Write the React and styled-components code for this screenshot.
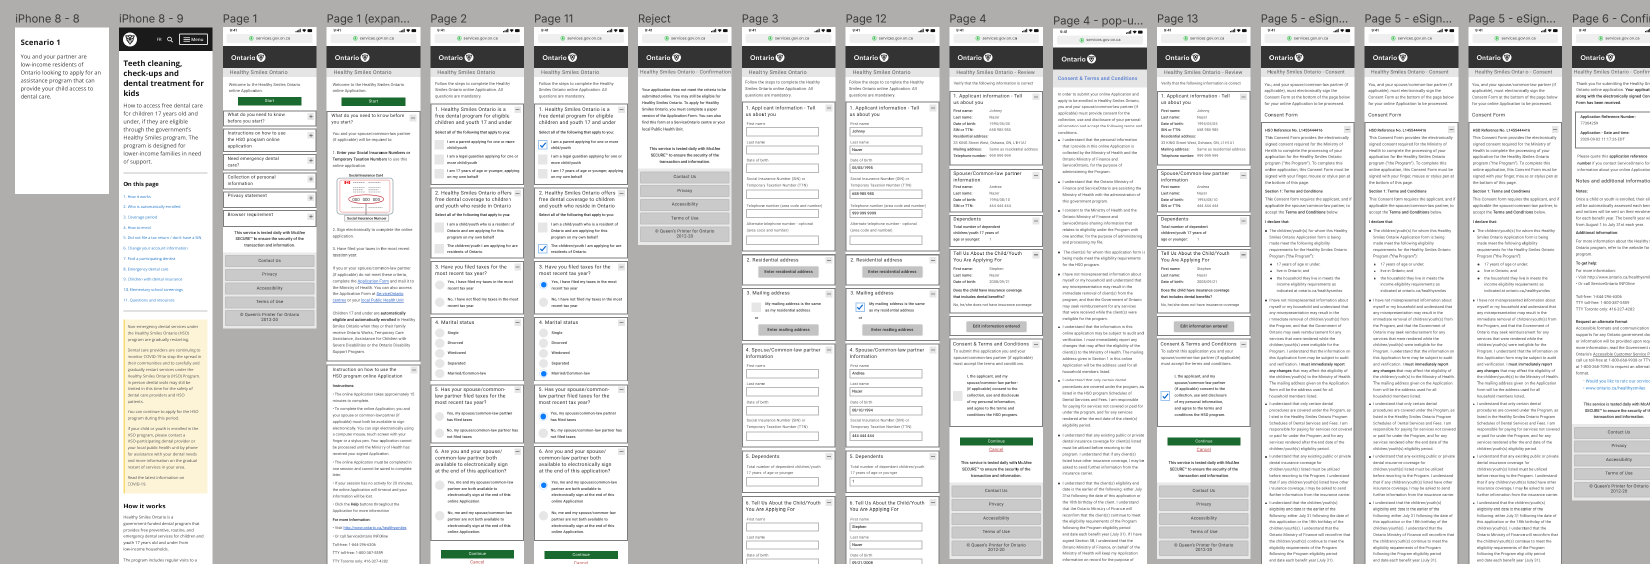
import React from "react";
import styled, { createGlobalStyle, css } from "styled-components";

const Global = createGlobalStyle`
  *, *::before, *::after { box-sizing: border-box; }
  body { margin: 0; background: #afaeac; text-rendering: geometricPrecision; }
  p, ul { margin: 0; padding: 0; }
`;

/* ---------- canvas ---------- */

const Viewport = styled.div`
  width: 1650px;
  height: 564px;
  overflow: hidden;
  background: #afaeac;
`;

/* Screens are laid out at twice their size and shown at half, so small type keeps exact metrics. */
const Canvas = styled.main`
  display: flex;
  align-items: flex-start;
  gap: 10.05px;
  width: 1650px;
  height: 564px;
  padding-left: 15.2px;
  overflow: hidden;
  background: #afaeac;
  font-family: Roboto, "Liberation Sans", sans-serif;
  zoom: 2;
  transform: scale(0.5);
  transform-origin: 0 0;
  will-change: transform;
`;

const Column = styled.section`
  flex: none;
  width: 93.75px;
`;

const FrameLabel = styled.div`
  height: ${(p) => p.$h || 27}px;
  padding-bottom: ${(p) => p.$pb ?? 0.6}px;
  display: flex;
  align-items: flex-end;
  font: 400 11.15px/15px Inter, sans-serif;
  color: #3b3a3a;
  white-space: nowrap;
`;

const Sheet = styled.article`
  background: #fff;
  min-height: ${(p) => (p.$tall ? "540px" : "0")};
`;

/* ---------- text ---------- */

const Txt = styled.p`
  font-size: ${(p) => p.$s || 4}px;
  line-height: ${(p) => p.$lh || 6.4}px;
  letter-spacing: ${(p) => p.$ls ?? 0.06}px;
  font-weight: ${(p) => p.$w || 400};
  color: ${(p) => p.$c || "#4d4d4d"};
  margin-top: ${(p) => p.$mt || 0}px;
  margin-left: ${(p) => p.$ml || 0}px;
  text-align: ${(p) => (p.$center ? "center" : "left")};
  white-space: pre;
  b { font-weight: 500; color: #222; }
  a { color: #2b5fc0; text-decoration: underline; }
`;

const Strong = styled(Txt)`
  font-weight: 500;
  color: #222;
`;

const HeadText = styled(Txt)`
  flex: 1;
  min-width: 0;
  color: #2b2b2b;
  line-height: 6.5px;
`;

/* ---------- phone chrome ---------- */

const Chrome = styled.header`
  height: 18.8px;
  padding: 0 3.9px;
  background: #fff;
`;

const StatusBar = styled.div`
  display: flex;
  justify-content: space-between;
  align-items: center;
  height: 7px;
  padding: 0 0 0 3px;
  font: 600 3.6px/7px Inter, sans-serif;
  color: #111;
`;

const AddressBar = styled.div`
  display: flex;
  align-items: center;
  justify-content: center;
  gap: 2.2px;
  height: 9px;
  border-radius: 2px;
  background: #efefef;
  font: 400 3.85px/9px Inter, sans-serif;
  color: #444;
`;

const Brand = styled.div`
  display: flex;
  align-items: center;
  gap: 1.2px;
  height: 22.2px;
  padding: 1px 0 0 8.3px;
  background: #333;
  color: #fff;
  font: 700 6.6px/8px Lato, sans-serif;
  letter-spacing: 0.25px;
`;

const TitleBand = styled.div`
  height: ${(p) => (p.$link ? 17.8 : 8.8)}px;
  line-height: ${(p) => (p.$link ? 18.6 : 8.8)}px;
  padding-left: ${(p) => p.$pl ?? 7}px;
  background: #e5e5e5;
  color: ${(p) => (p.$link ? "#4a74cf" : "#5a5a5a")};
  font-size: ${(p) => p.$s || 5.25}px;
  font-weight: ${(p) => (p.$link ? 500 : 400)};
  letter-spacing: ${(p) => p.$ls ?? 0.22}px;
  white-space: nowrap;
`;

const Trillium = ({ size = 9, ink = "#222" }) => (
  <svg width={size} height={size} viewBox="0 0 18 18">
    <circle cx="9" cy="9" r="9" fill="#fff" />
    <g fill="none" stroke={ink} strokeWidth="1.15" strokeLinejoin="round" strokeLinecap="round">
      <path d="M9 8.400C8.200 5.600 6 4 3.500 4.200 3.800 6.800 6 8.600 9 8.400z" />
      <path d="M9 8.400C9.800 5.600 12 4 14.500 4.200 14.200 6.800 12 8.600 9 8.400z" />
      <path d="M9 8.400C6.900 10.400 6.900 12.900 9 15c2.100-2.100 2.100-4.600 0-6.600z" />
      <path d="M4.600 7.800c.3 2.300 1.400 4.200 3 5.200M13.400 7.800c-.3 2.300-1.400 4.200-3 5.200M7 4.200c1.300-.9 2.700-.9 4 0" />
    </g>
  </svg>
);

const SignalIcons = () => (
  <svg width="17" height="4" viewBox="0 0 17 4">
    <g fill="#111">
      <path d="M0 2.600h1v1.200H0zM1.400 2h1v1.800h-1zM2.800 1.200h1v2.600h-1zM4.200.3h1v3.500h-1z" />
      <path d="M6.600 1.400a3.200 3.200 0 0 1 4.200 0L8.700 3.800z" />
      <rect x="12" y=".6" width="4.600" height="3" rx=".8" />
    </g>
  </svg>
);

const Shield = () => (
  <svg width="4.600" height="4.600" viewBox="0 0 9 9">
    <circle cx="4.500" cy="4.500" r="3.900" fill="#dff5e2" stroke="#4fc764" strokeWidth="1.100" />
    <path d="M3.300 4v2.400h2.400V4zM3.700 4V3a.8.8 0 0 1 1.600 0v1" fill="#38b44c" stroke="#38b44c" strokeWidth=".6" />
  </svg>
);

const PageTop = ({ title, pl, s, ls, link }) => (
  <>
    <Chrome>
      <StatusBar>
        <span>9:41</span>
        <SignalIcons />
      </StatusBar>
      <AddressBar>
        <Shield />
        services.gov.on.ca
      </AddressBar>
    </Chrome>
    <Brand>
      Ontario
      <Trillium />
    </Brand>
    <TitleBand $pl={pl} $s={s} $ls={ls} $link={link}>{title}</TitleBand>
  </>
);

/* ---------- cards, controls ---------- */

const Card = styled.section`
  margin-top: ${(p) => p.$mt}px;
  height: ${(p) => p.$h}px;
  padding: ${(p) => p.$pt || 0}px 1px 0 ${(p) => p.$pl ?? 3.8}px;
  border: 1px solid #7d7d7d;
  background: #fff;
`;

const CardHead = styled.div`
  display: flex;
  align-items: flex-start;
  height: ${(p) => p.$n * 6.5}px;
`;

const Toggle = styled.span`
  flex: none;
  width: 6.8px;
  height: 6.8px;
  margin: ${(p) => p.$mt ?? -0.2}px ${(p) => p.$mr ?? 1}px 0 0;
  background: #e6e6e6;
  display: flex;
  align-items: center;
  justify-content: center;
`;

const ToggleIcon = ({ plus }) => (
  <svg width="5" height="5" viewBox="0 0 5 5">
    <path d={plus ? "M.8 2.500h3.400M2.500.8v3.400" : "M.5 2.500h4"} stroke="#666" strokeWidth=".7" />
  </svg>
);

const Head = ({ n = 1, s = 5, ls = 0.19, plus, mt, mr, children }) => (
  <CardHead $n={n}>
    <HeadText $s={s} $ls={ls} $lh={6.5}>{children}</HeadText>
    <Toggle $mt={mt} $mr={mr}><ToggleIcon plus={plus} /></Toggle>
  </CardHead>
);

const Button = styled.div`
  width: ${(p) => p.$w || 73.2}px;
  height: ${(p) => p.$h || 8.3}px;
  line-height: ${(p) => p.$h || 8.3}px;
  margin: ${(p) => p.$mt || 0}px 0 0 ${(p) => p.$ml ?? 10.4}px;
  background: #1a692e;
  color: #e8f3ea;
  font-size: 4.1px;
  letter-spacing: 0.12px;
  text-align: center;
`;

const GreyButton = styled(Button)`
  width: 60px;
  background: #c3c3c3;
  color: #2e2e2e;
  font-weight: 500;
  border-radius: 1px;
  box-shadow: 0 0 1px #aaa;
`;

const CancelLink = styled.div`
  margin-top: ${(p) => p.$mt}px;
  font-size: 4.500px;
  line-height: 6.4px;
  letter-spacing: 0.1px;
  text-align: center;
  color: #bd4b4b;
  text-decoration: underline;
  text-decoration-thickness: 0.4px;
`;

const OptionRow = styled.div`
  display: flex;
  align-items: ${(p) => (p.$mid ? "center" : "flex-start")};
  gap: ${(p) => p.$gap || 3.300}px;
  margin-top: ${(p) => p.$mt}px;
  margin-left: ${(p) => p.$ml || 0}px;
`;

const controlBase = css`
  flex: none;
  display: flex;
  align-items: center;
  justify-content: center;
  margin-top: ${(p) => p.$mt ?? 1.2}px;
`;

const Box = styled.span`
  ${controlBase}
  width: 9.5px;
  height: 9.6px;
  margin-left: -0.8px;
  background: ${(p) => (p.$on ? "#fff" : "#e6e6e6")};
  border: ${(p) => (p.$on ? "1px solid #9cc4ee" : "0")};
`;

const Dot = styled.span`
  ${controlBase}
  width: 9.2px;
  height: 9.2px;
  border-radius: 50%;
  background: ${(p) => (p.$on ? "#fff" : "#e6e6e6")};
  border: ${(p) => (p.$on ? "1px solid #dcebfb" : "0")};
  &::after {
    content: "";
    display: ${(p) => (p.$on ? "block" : "none")};
    width: 5.6px;
    height: 5.6px;
    border-radius: 50%;
    background: #0a7cff;
  }
`;

const Tick = () => (
  <svg width="7" height="7" viewBox="0 0 7 7">
    <path d="M.8 3.800l1.800 1.800L6.200 1.200" fill="none" stroke="#0b68d0" strokeWidth="1.200" />
  </svg>
);

const Option = ({ mt, ml, gap, round, on, mid, drop, children }) => (
  <OptionRow $mt={mt} $ml={ml} $gap={gap} $mid={mid}>
    {round ? <Dot $on={on} $mt={mid ? 0 : drop} /> : <Box $on={on} $mt={drop}>{on && <Tick />}</Box>}
    <Txt $s={3.75} $ls={0.09} $w={500} $c="#3c3c3c">{children}</Txt>
  </OptionRow>
);

const Input = styled.div`
  width: 73px;
  height: 9.4px;
  margin-top: ${(p) => p.$mt ?? -0.4}px;
  padding-left: 1.500px;
  border: 1px solid #b9b9b9;
  font-size: 3.900px;
  line-height: 7.4px;
  font-weight: 500;
  color: #333;
`;

const Field = ({ label, value, mt, gap }) => (
  <div>
    <Txt $s={3.75} $ls={0.1} $ml={0.800} $mt={mt} $c="#5a5a5a">{label}</Txt>
    <Input $mt={gap}>{value}</Input>
  </div>
);

const FactGrid = styled.div`
  display: grid;
  grid-template-columns: 36px 1fr;
  margin-top: ${(p) => p.$mt}px;
`;

const Facts = ({ mt, keys, values }) => (
  <FactGrid $mt={mt}>
    <Txt $s={3.75} $ls={0.06} $lh={6.38} $c="#3a3a3a" $w={500}>{keys}</Txt>
    <Txt $s={3.75} $ls={0.06} $lh={6.38} $c="#5c5c5c">{values}</Txt>
  </FactGrid>
);

/* ---------- footer ---------- */

const FooterBlock = styled.footer`
  display: flex;
  flex-direction: column;
  gap: 1.75px;
  height: 76.300px;
  margin-top: 3.400px;
  padding: 2.800px 2px 0;
  background: #e9e9e9;
`;

const FooterLink = styled.div`
  flex: none;
  display: flex;
  align-items: center;
  justify-content: center;
  height: ${(p) => p.$h || 12}px;
  border-radius: 1px;
  border: 1px solid #c0c0c0;
  background: #cacaca;
  font-size: 4.300px;
  line-height: 4.900px;
  letter-spacing: 0.16px;
  text-align: center;
  white-space: pre;
  color: #333;
`;

const Footer = ({ mt }) => (
  <>
    <Txt $mt={mt} $center $w={500} $c="#333" $ls={0}>
      {"This service is tested daily with McAfee\nSECURE™ to ensure the security of the\ntransaction and information."}
    </Txt>
    <FooterBlock>
      <FooterLink>Contact Us</FooterLink>
      <FooterLink>Privacy</FooterLink>
      <FooterLink>Accessibility</FooterLink>
      <FooterLink>Terms of Use</FooterLink>
      <FooterLink $h={15.6}>{"© Queen’s Printer for Ontario\n2012-20"}</FooterLink>
    </FooterBlock>
  </>
);

/* ---------- bullets ---------- */

const BulletRow = styled.div`
  display: flex;
  align-items: flex-start;
  margin-top: ${(p) => p.$mt}px;
  padding-left: ${(p) => p.$pl || 0}px;
`;

const Marker = styled.i`
  flex: none;
  width: 1.800px;
  height: 1.800px;
  margin: 2.300px ${(p) => p.$gap || 2.400}px 0 0;
  border-radius: 50%;
  background: #444;
`;

const Bullet = ({ mt, pl, gap, ls, children }) => (
  <BulletRow $mt={mt} $pl={pl}>
    <Marker $gap={gap} />
    <Txt $s={3.9} $ls={ls ?? 0.04}>{children}</Txt>
  </BulletRow>
);

/* ---------- Ontario.ca article ---------- */

const Article = styled(Sheet)`
  font-family: "Open Sans", "Noto Sans", sans-serif;
  min-height: 540px;
`;

const ScenarioSheet = styled(Sheet)`
  height: 166.500px;
  padding: 10.600px 0 0 5.400px;
  font-family: "Open Sans", "Noto Sans", sans-serif;
`;

const SiteHeader = styled.header`
  display: flex;
  align-items: center;
  height: 23.300px;
  padding: 0 4px;
  background: #1a1a1a;
  color: #eee;
  font-size: 4.400px;
`;

const Lang = styled.span`
  margin-left: 19.600px;
`;

const SearchIcon = styled.svg`
  margin-left: 5.500px;
`;

const MenuButton = styled.span`
  display: flex;
  align-items: center;
  justify-content: center;
  gap: 1.300px;
  width: 28.700px;
  height: 11.300px;
  margin-left: 6px;
  border: 1px solid #ddd;
  border-radius: 1px;
  font-weight: 600;
`;

const ArticleBody = styled.div`
  padding: 0 5px 0 4.400px;
`;

const Display = styled.h2`
  margin: ${(p) => p.$mt || 0}px 0 0 ${(p) => p.$ml || 0}px;
  font: 700 ${(p) => p.$s}px/${(p) => p.$lh || 8}px "Open Sans", sans-serif;
  letter-spacing: ${(p) => p.$ls || 0}px;
  color: #161616;
  white-space: pre;
`;

const Rule = styled.hr`
  margin: ${(p) => p.$mt}px 0 0;
  height: 1px;
  border: 0;
  background: #c2c2c2;
`;

const Notice = styled.aside`
  height: 174px;
  margin-top: 7.900px;
  padding: 4.400px 0 0 2.600px;
  border-left: 1.500px solid #f7dc74;
  background: #fdf4d8;
`;

/* ---------- screens ---------- */

const Screen = ({ label, tall, labelH, labelPb, children }) => (
  <Column>
    <FrameLabel $h={labelH} $pb={labelPb}>{label}</FrameLabel>
    <Sheet $tall={tall}>{children}</Sheet>
  </Column>
);

const Scenario = () => (
  <Column>
    <FrameLabel $h={27.7} $pb={1.2}>iPhone 8 - 8</FrameLabel>
    <ScenarioSheet>
      <Display $s={7.6} $ls={0.12}>Scenario 1</Display>
      <Txt $s={5.55} $lh={8} $ls={0.04} $mt={6.700} $c="#2e2e2e">
        {"You and your partner are\nlow-income residents of\nOntario looking to apply for an\nassistance program that can\nprovide your child access to\ndental care."}
      </Txt>
    </ScenarioSheet>
  </Column>
);

const OntarioArticle = () => (
  <Column>
    <FrameLabel $h={27.7} $pb={1.2}>iPhone 8 - 9</FrameLabel>
    <Article>
      <SiteHeader>
        <Trillium size={14} />
        <Lang>FR</Lang>
        <SearchIcon width="6" height="6" viewBox="0 0 12 12">
          <circle cx="5" cy="5" r="3.800" fill="none" stroke="#fff" strokeWidth="1.500" />
          <path d="M7.800 7.800L11.400 11.400" stroke="#fff" strokeWidth="1.800" />
        </SearchIcon>
        <MenuButton>
          <svg width="6.500" height="5" viewBox="0 0 13 10">
            <path d="M0 1.500h13M0 5h13M0 8.500h13" stroke="#fff" strokeWidth="1.700" />
          </svg>
          Menu
        </MenuButton>
      </SiteHeader>
      <ArticleBody>
        <Display $s={7.75} $lh={10} $mt={7}>{"Teeth cleaning,\ncheck-ups and\ndental treatment for\nkids"}</Display>
        <Txt $s={5.5} $lh={8} $ls={0.04} $mt={4} $c="#333">
          {"How to access free dental care\nfor children 17 years old and\nunder, if they are eligible\nthrough the government’s\nHealthy Smiles program. The\nprogram is designed for\nlower-income families in need\nof support."}
        </Txt>
        <Rule $mt={6.300} />
        <Display $s={5.65} $mt={7.400}>On this page</Display>
        <Txt $s={3.85} $lh={10.36} $ls={0} $mt={3.100} $c="#2478c8">
          {"1. How it works\n2. Who is automatically enrolled\n3. Coverage period\n4. How to enrol\n5. Did not file a tax return / don’t have a SIN\n6. Change your account information\n7. Find a participating dentist\n8. Emergency dental care\n9. Children with dental insurance\n10. Elementary school screenings\n11. Questions and resources"}
        </Txt>
        <Rule $mt={5} />
        <Notice>
          <Txt $s={4} $lh={6.42} $ls={0}>{"Non-emergency dental services under\nthe Healthy Smiles Ontario (HSO)\nprogram are gradually restarting."}</Txt>
          <Txt $s={4} $lh={6.42} $ls={0} $mt={4.400}>{"Dental care providers are continuing to\nmonitor COVID-19 to stop the spread in\ntheir communities and to carefully and\ngradually restart services under the\nHealthy Smiles Ontario (HSO) Program.\nIn person dental visits may still be\nlimited in this time for the safety of\ndental care providers and HSO\npatients."}</Txt>
          <Txt $s={4} $lh={6.42} $ls={0} $mt={3.600}>{"You can continue to apply for the HSO\nprogram during this period."}</Txt>
          <Txt $s={4} $lh={6.42} $ls={0} $mt={3.900}>{"If your child or youth is enrolled in the\nHSO program, please contact a\nHSO-participating dental provider or\nyour local public health unit by phone\nfor assistance with your dental needs\nand more information on the gradual\nrestart of services in your area."}</Txt>
          <Txt $s={4} $lh={6.42} $ls={0} $mt={4.100}>{"Read the latest information on\nCOVID-19."}</Txt>
        </Notice>
        <Display $s={6.45} $mt={8.300}>How it works</Display>
        <Txt $s={4} $lh={6.42} $ls={0} $mt={4.500} $c="#333">{"Healthy Smiles Ontario is a\ngovernment-funded dental program that\nprovides free preventive, routine, and\nemergency dental services for children and\nyouth 17 years old and under from\nlow-income households."}</Txt>
        <Txt $s={4} $lh={6.42} $ls={0} $mt={4.500} $c="#333">The program includes regular visits to a</Txt>
      </ArticleBody>
    </Article>
  </Column>
);

const accordion = [
  ["What do you need to know\nbefore you start?", 16.4, 4.6, 0.500],
  ["Instructions on how to use\nthe HSO program online\napplication", 23.3, 2, 1],
  ["Need emergency dental\ncare?", 16.7, 2, 1],
  ["Collection of personal\ninformation", 16.7, 2, 0.8],
  ["Privacy statement", 16.7, 2, 0.800],
  ["Browser requirement", 16.7, 2, 1],
];

const PageOne = () => (
  <Screen label="Page 1">
    <PageTop title="Healthy Smiles Ontario" />
    <Txt $mt={5} $ml={6}>{"Welcome to the Healthy Smiles Ontario\nonline Application."}</Txt>
    <Button $mt={2.4} $h={8.7} $w={63.7} $ml={15}>Start</Button>
    {accordion.map(([text, h, mt, pt]) => (
      <Card key={text} $h={h} $mt={mt} $pt={pt}>
        <Head s={4.5} ls={0.200} n={text.split("\n").length} plus mt={1.200} mr={0.300}>{text}</Head>
      </Card>
    ))}
    <Footer mt={3.100} />
  </Screen>
);

const CardDrawing = styled.svg`
  display: block;
  margin-left: 5.200px;
`;

const InsuranceCard = () => (
  <CardDrawing width="60" height="57.600" viewBox="0 0 60 57.600" fontFamily="Roboto" textAnchor="middle">
    <text x="29.500" y="7" fontSize="3.500" fontWeight="700" fill="#333">Social Insurance Card</text>
    <rect x=".5" y="8.600" width="56" height="36" rx="3" fill="#fff" stroke="#9aa6ad" strokeWidth=".8" />
    <rect x="3.400" y="10.600" width="50" height="32" rx="2" fill="none" stroke="#f3a0a0" strokeWidth=".7" />
    <path d="M8 11.500h1.600v3H8zM12 11.500h1.600v3H12zM9.900 13l.9-1.500.9 1.500-.9 1.200z" fill="#e8262c" />
    <path d="M16.500 12.800h12M32 12.800h12M16.500 18h12M32 18h12M16.500 20.300h10M32 20.300h10M16.500 22.500h12M32 22.500h12M15 38h12M32 38h14" stroke="#777" strokeWidth=".6" strokeDasharray="1.400 .5" />
    <ellipse cx="29.700" cy="29.700" rx="17.500" ry="4.400" fill="none" stroke="#c6303a" strokeWidth=".6" />
    <text x="19.500" y="31.400" fontSize="4.300" fill="#333">000</text>
    <text x="29.700" y="31.400" fontSize="4.300" fill="#333">000</text>
    <text x="39.900" y="31.400" fontSize="4.300" fill="#333">000</text>
    <path d="M29.500 34v12" stroke="#555" strokeWidth=".6" />
    <rect x="8.300" y="45.800" width="44" height="5.800" fill="#fff" stroke="#888" strokeWidth=".5" />
    <text x="30.300" y="50" fontSize="3.500" fontWeight="700" fill="#333">Social Insurance Number</text>
  </CardDrawing>
);

const PageOneExpanded = () => (
  <Screen label="Page 1 (expan..." tall>
    <PageTop title="Healthy Smiles Ontario" />
    <Txt $mt={5} $ml={6}>{"Welcome to the Healthy Smiles Ontario\nonline Application."}</Txt>
    <Button $mt={3.100} $w={63.7} $ml={15}>Start</Button>
    <Card $mt={5} $h={250.300} $pt={1.100}>
      <Head n={2} s={4.5} ls={0.200} mt={1.500} mr={1.800}>{"What do you need to know before\nyou start?"}</Head>
      <Txt $mt={4.700} $ml={1.200} $lh={6.430}>
        {"You and your spouse/common-law partner\n(if applicable) will be required to:\n\n1. "}
        <b>{"Enter your Social Insurance Numbers or\nTemporary Taxation Numbers"}</b>
        {" to use this\nonline application."}
      </Txt>
      <InsuranceCard />
      <Txt $ml={1.200} $lh={6.430}>
        {"2. Sign electronically to complete the online\napplication.\n\n3. Have filed your taxes in the most recent\ntaxation year.\n\nIf you or your spouse/common-law partner\n(if applicable) do not meet these criteria,\ncomplete the "}
        <a>Application Form</a>
        {" and mail it to\nthe Ministry of Health. You can also access\nthe Application Form at "}
        <a>{"ServiceOntario\ncentres"}</a>
        {" or your "}
        <a>local Public Health Unit</a>
        {"\n\nChildren 17 and under are "}
        <b>{"automatically\neligible and automatically enrolled"}</b>
        {" in Healthy\nSmiles Ontario when they or their family\nreceive Ontario Works, Temporary Care\nAssistance, Assistance for Children with\nSevere Disabilities or the Ontario Disability\nSupport Program."}
      </Txt>
    </Card>
    <Card $mt={3} $h={220} $pt={1.800} $pl={5}>
      <Head n={2} s={4.5} ls={0.200} mt={-0.400} mr={0.800}>{"Instruction on how to use the\nHSO program online Application"}</Head>
      <Strong $mt={3} $s={3.85} $ls={0.02}>Instructions:</Strong>
      <Txt $s={3.85} $ls={0.02} $mt={2}>{"• The online Application takes approximately 15\nminutes to complete."}</Txt>
      <Txt $s={3.85} $ls={0.02} $mt={1.800} $lh={6.410}>{"• To complete the online Application, you and\nyour spouse or common-law partner (if\napplicable) must both be available to sign\nelectronically. You can sign electronically using\na computer mouse, touch screen with your\nfinger or a stylus pen. Your application cannot\nbe processed until the Ministry of Health has\nreceived your signed Application."}</Txt>
      <Txt $s={3.85} $ls={0.02} $mt={2.100}>{"• The online Application must be completed in\none session and cannot be saved to complete\nlater."}</Txt>
      <Txt $s={3.85} $ls={0.02} $mt={2}>{"• If your session has no activity for 20 minutes,\nthe online Application will timeout and your\ninformation will be lost."}</Txt>
      <Txt $s={3.85} $ls={0.02} $mt={1.900}>{"• Click the "}<b>Help</b>{" buttons throughout the\nApplication for more information"}</Txt>
      <Txt $s={3.85} $ls={0.02} $mt={1.300} $lh={8.330}>
        <b>For more Information:</b>
        {"\n• Visit "}<a>http://www.ontario.ca/healthysmiles</a>
        {"\n• Or call ServiceOntario INFOline\nToll-free: 1-844-296-6306\nTTY toll-free: 1-800-387-5559\nTTY Toronto only: 416-327-4282"}
      </Txt>
    </Card>
  </Screen>
);

const steps = "Follow the steps to complete the Healthy\nSmiles Ontario online Application. All\nquestions are mandatory.";
const selectAll = "Select all of the following that apply to you:";

const Eligibility = ({ label, filled }) => (
  <Screen label={label} tall>
    <PageTop title="Healthy Smiles Ontario" />
    <Txt $mt={4} $ml={4.700}>{steps}</Txt>
    <Card $mt={3.700} $h={81.300} $pt={1.800}>
      <Head n={3}>{"1. Healthy Smiles Ontario is a\nfree dental program for eligible\nchildren and youth 17 and under"}</Head>
      <Strong $s={3.75} $ls={0.060} $mt={3.500}>{selectAll}</Strong>
      <Option mt={2.900} on={filled}>{"I am a parent applying for one or more\nchild/youth"}</Option>
      <Option mt={1.900}>{"I am a legal guardian applying for one or\nmore child/youth"}</Option>
      <Option mt={1.500}>{"I am 17 years of age or younger, applying\non my own behalf"}</Option>
    </Card>
    <Card $mt={2.300} $h={71.400} $pt={1.800}>
      <Head n={3}>{"2. Healthy Smiles Ontario offers\nfree dental coverage to children\nand youth who reside in Ontario"}</Head>
      <Strong $s={3.75} $ls={0.060} $mt={2.200}>{selectAll}</Strong>
      <Option mt={3.300}>{"I am a child/youth who is a resident of\nOntario and am applying for this\nprogram on my own behalf"}</Option>
      <Option mt={2.100} on={filled}>{"The children/youth I am applying for are\nresidents of Ontario."}</Option>
    </Card>
    <Card $mt={2.300} $h={53.700} $pt={1.800}>
      <Head n={2}>{"3. Have you filed taxes for the\nmost recent tax year?"}</Head>
      <Option round mt={2.300} on={filled}>{"Yes, I have filed my taxes in the most\nrecent tax year"}</Option>
      <Option round mt={4.600}>{"No, I have not filed my taxes in the most\nrecent tax year"}</Option>
    </Card>
    <Card $mt={2.300} $h={64.700} $pt={1.500}>
      <Head>4. Marital status</Head>
      <Option round mid mt={2.400}>Single</Option>
      <Option round mid mt={1}>Divorced</Option>
      <Option round mid mt={1}>Windowed</Option>
      <Option round mid mt={1}>Separated</Option>
      <Option round mid mt={0.900} on={filled}>Married/Common-law</Option>
    </Card>
    <Card $mt={2.600} $h={59.400} $pt={1.200} $pl={3.4}>
      <Head n={3}>{"5. Has your spouse/common-\nlaw partner filed taxes for the\nmost recent tax year?"}</Head>
      <Option round mt={4.800} gap={2.800} on={filled}>{"Yes, my spouse/common-law partner\nhas filed taxes"}</Option>
      <Option round mt={3.900} gap={2.800}>{"No, my spouse/common-law partner has\nnot filed taxes"}</Option>
    </Card>
    <Card $mt={2.300} $h={95.300} $pt={1.500}>
      <Head n={4}>{"6. Are you and your spouse/\ncommon-law partner both\navailable to electronically sign\nat the end of this application?"}</Head>
      <Option round mt={5} on={filled}>{"Yes, me and my spouse/common-law\npartner are both available to\nelectronically sign at the end of this\nonline Application"}</Option>
      <Option round mt={5}>{"No, me and my spouse/common-law\npartner are not both available to\nelectronically sign at the end of this\nonline Application."}</Option>
    </Card>
    <Button $mt={filled ? 9.700 : 9}>Continue</Button>
    <CancelLink $mt={1.100}>Cancel</CancelLink>
  </Screen>
);

const Reject = () => (
  <Screen label="Reject">
    <PageTop title="Healthy Smiles Ontario - Confirmation" pl={2} s={5} ls={0.200} />
    <Txt $mt={9.600} $ml={4} $lh={6.570} $w={500} $c="#444" $s={3.85} $ls={0.03}>
      {"Your application does not meet the criteria to be\nsubmitted online. You may still be eligible for\nHealthy Smiles Ontario. To apply for Healthy\nSmiles Ontario, you must complete a paper\nversion of the Application Form. You can also\nfind this form at a ServiceOntario centre or your\nlocal Public Health Unit."}
    </Txt>
    <Footer mt={13.700} />
  </Screen>
);

const sin = "Social Insurance Number (SIN) or\nTemporary Taxation Number (TTN)";

const Application = ({ label, v = {} }) => (
  <Screen label={label} tall>
    <PageTop title="Healthy Smiles Ontario" />
    <Txt $mt={2.700} $ml={3.400}>{steps}</Txt>
    <Card $mt={3} $h={150} $pt={2.400} $pl={3}>
      <Head n={2} s={4.900} mt={-0.600}>{"1. Applicant information - Tell\nus about you"}</Head>
      <Field mt={3} label="First name" value={v.first} />
      <Field mt={2.800} label="Last name" value={v.last} />
      <Field mt={2.900} label="Date of birth" value={v.dob} />
      <Field mt={3.100} gap={0.700} label={sin} value={v.sin} />
      <Field mt={3.800} label="Telephone number (area code and number)" value={v.tel} />
      <Field mt={3.100} gap={1.400} label={"Alternate telephone number - optional\n(area code and number)"} />
    </Card>
    <Card $mt={2.600} $h={31.400} $pt={1.800}>
      <Head s={4.900}>2. Residential address</Head>
      <GreyButton $mt={2.700} $ml={12} $h={11.300}>Enter residential address</GreyButton>
    </Card>
    <Card $mt={2.300} $h={53} $pt={1.100}>
      <Head s={4.900} mt={0.600}>3. Mailing address</Head>
      <Option mt={4.500} ml={5.700} gap={4.300} on={!!v.first}>{"My mailing address is the same\nas my residential address"}</Option>
      <Txt $s={3.75} $w={500} $mt={1.200} $ml={8.200} $c="#333">or</Txt>
      <GreyButton $mt={2.800} $ml={12} $h={11.300}>Enter mailing address</GreyButton>
    </Card>
    <Card $mt={2.700} $h={104} $pt={2.400} $pl={3}>
      <Head n={2} s={4.900} mt={-0.600}>{"4. Spouse/Common-law partner\nInformation"}</Head>
      <Field mt={2.700} gap={0} label="First name" value={v.sFirst} />
      <Field mt={2.400} gap={-0.200} label="Last name" value={v.last} />
      <Field mt={3.100} gap={-0.200} label="Date of birth" value={v.sDob} />
      <Field mt={2.400} gap={1.100} label={sin} value={v.sSin} />
    </Card>
    <Card $mt={2.600} $h={42.700} $pt={2.200} $pl={3}>
      <Head s={4.900} mt={-0.300}>5. Dependents</Head>
      <Field mt={3.800} gap={0.400} label={"Total number of dependent children/youth\n17 years of age or younger"} value={v.deps} />
    </Card>
    <Card $mt={3} $h={120} $pt={2.800} $pl={3}>
      <Head n={2} s={4.900} mt={-0.600}>{"6. Tell Us About the Child/Youth\nYou Are Applying For"}</Head>
      <Field mt={3.700} gap={-0.600} label="First name" value={v.cFirst} />
      <Field mt={2.800} gap={-0.600} label="Last name" value={v.last} />
      <Field mt={2.800} gap={-0.600} label="Date of birth" value={v.cDob} />
    </Card>
  </Screen>
);

const AddressLine = styled.span`
  color: #5c5c5c;
  font-weight: 400;
`;

const Review = ({ label, agreed }) => (
  <Screen label={label}>
    <PageTop title="Healthy Smiles Ontario - Review" pl={7} s={5.150} ls={0.200} />
    <Txt $mt={3.700} $ml={4.200} $s={3.85} $ls={0.03}>Verify that the following information is correct</Txt>
    <Card $mt={4.100} $h={74.700} $pt={0.800} $pl={3}>
      <Head n={2} s={4.850} mt={0.600} mr={1.800}>{"1. Applicant information - Tell\nus about you"}</Head>
      <Facts
        mt={2.300}
        keys={<>{"First name:\nLast name:\nDate of birth:\nSIN or TTN:\nResidential address:\n"}<AddressLine>33 KING Street West, Oshawa, ON, L1H1A1</AddressLine>{"\nMailing address:\nTelephone number:"}</>}
        values={"Johnny\nNazer\n1995/05/05\n658 985 985\n\n\nSame as residential address\n999 999 999"}
      />
    </Card>
    <Card $mt={3.300} $h={43.700} $pt={0.500} $pl={3}>
      <Head n={2} s={4.850} mt={1.500} mr={1.800}>{"Spouse/Common-law partner\ninformation"}</Head>
      <Facts mt={0.600} keys={"First name:\nLast name:\nDate of birth:\nSIN or TTN:"} values={"Andrea\nNazer\n1994/08/10\n444 444 444"} />
    </Card>
    <Card $mt={2.300} $h={32} $pt={0.100} $pl={3}>
      <Head s={4.850} mt={1.400} mr={1.800}>Dependents</Head>
      <Facts mt={1.200} keys={"Total number of dependent\nchildren/youth 17 years of\nage or younger:"} values={"\n\n1"} />
    </Card>
    <Card $mt={2} $h={64.300} $pt={0.500} $pl={3}>
      <Head n={2} s={4.850} mt={1.200} mr={1.800}>{"Tell Us About the Child/Youth\nYou Are Applying For"}</Head>
      <Facts mt={2.600} keys={"First name:\nLast name:\nDate of birth:"} values={"Stephen\nNazer\n2008/09/21"} />
      <Strong $s={3.75} $mt={2.500} $c="#3a3a3a">{"Does the child have insurance coverage\nthat includes dental benefits?"}</Strong>
      <Txt $s={3.75} $mt={1.500}>No, he/she does not have insurance coverage</Txt>
    </Card>
    <Card $mt={2.700} $h={20} $pt={0.010} $pl={3}>
      <GreyButton $mt={4.300} $ml={13} $h={10.700}>Edit information entered</GreyButton>
    </Card>
    <Card $mt={2.300} $h={88.700} $pt={1.500} $pl={2.500}>
      <Head s={4.850} mt={0.500} mr={1.800}>Consent & Terms and Conditions</Head>
      <Txt $mt={1.200} $ml={0.600}>{"To submit this application you and your\nspouse/common-law partner (if applicable)\nmust accept the terms and conditions."}</Txt>
      <Option mt={5.800} ml={1} gap={4.300} drop={17.800} on={agreed}>
        {"I, the applicant, and my\nspouse/common-law partner\n(if applicable) consent to the\ncollection, use and disclosure\nof my personal information,\nand agree to the terms and\nconditions the HSO program."}
      </Option>
    </Card>
    <Button $mt={10.700} $h={8}>Continue</Button>
    <CancelLink $mt={1.400}>Cancel</CancelLink>
    <Footer mt={6.600} />
  </Screen>
);

const popupTerms = [
  [0.9, "I understand that the personal information\nthat I provide in this online Application is\ncollected by the Ministry of Health and the\nOntario Ministry of Finance and\nServiceOntario, for the purpose of\nadministering the Program."],
  [3.6, "I understand that the Ontario Ministry of\nFinance and ServiceOntario are assisting the\nMinistry of Health with the administration of\nthis government program."],
  [3.1, "I consent to the Ministry of Health and the\nOntario Ministry of Finance and\nServiceOntario sharing information that\nrelates to eligibility under the Program with\none another, for the purpose of administering\nand processing my file."],
  [3.2, " The client(s) for whom this application form is\nbeing made meet the eligibility requirements\nfor the HSO program."],
  [2.8, "I have not misrepresented information about\nmyself or my household and understand that\nany misrepresentation may result in the\nimmediate removal of client(s) from the\nprogram, and that the Government of Ontario\nmay seek reimbursement for any services\nthat were received while the client(s) were\nineligible for the program."],
  [1.5, "I understand that the information in this\nonline application may be subject to audit and\nverification. I must immediately report any\nchanges that may affect the eligibility of the\nclient(s) to the Ministry of Health. The mailing\naddress given in Section 1 in this online\nApplication will be the address used for all\nhousehold members listed."],
  [2.5, "I understand that only certain dental\nprocedures are covered under the program, as\nlisted in the HSO program Schedules of\nDental Services and Fees. I am responsible\nfor paying for services not covered or paid for\nunder the program, and for any services\nrendered after the end date of the client(s)\neligibility period."],
  [3.4, "I understand that any existing public or private\ndental insurance coverage for client(s) listed\nmust be utilized before resorting to the\nprogram. I understand that if any client(s)\nlisted have other insurance coverage, I may be\nasked to send further information from the\ninsurance carrier."],
  [3.2, "I understand that the client(s) eligibility end\ndate is the earlier of the following: either July\n31st following the date of this application or\nthe 18th birthday of the client. I understand\nthat the Ontario Ministry of Finance will\nreconfirm that the client(s) continue to meet\nthe eligibility requirements of the Program\nfollowing the Program eligibility period\nend date each benefit year (July 31). If I have\nsigned Section 5B, I understand that the\nOntario Ministry of Finance, on behalf of the\nMinistry of Health will keep my Application\ninformation on record for the purpose of"],
];

const TermsPopup = () => (
  <Screen label="Page 4 - pop-u..." tall labelH={28.7} labelPb={0.400}>
    <PageTop title="Consent & Terms and Conditions" link pl={4.800} s={4.900} ls={0.260} />
    <Txt $mt={3.900} $ml={4.800} $s={3.900} $ls={0.050}>
      {"In order to submit your online Application and\napply to be enrolled in Healthy Smiles Ontario,\nyou and your spouse/common-law partner (if\napplicable) must provide consent for the\ncollection, use and disclosure of your personal\ninformation and accept the following terms and\nconditions."}
    </Txt>
    {popupTerms.map(([mt, text]) => (
      <Bullet key={text} mt={mt} pl={5} gap={2.500}>{text}</Bullet>
    ))}
  </Screen>
);

const ConsentForm = () => (
  <Screen label="Page 5 - eSign..." tall>
    <PageTop title="Healthy Smiles Ontario - Consent" pl={6.500} s={5} ls={0.140} />
    <Txt $mt={5} $ml={3.800}>
      {"You, and your spouse/common-law partner (if\napplicable), must electronically sign the\nConsent Form at the bottom of the page below\nfor your online Application to be processed."}
    </Txt>
    <Txt $s={5} $ls={0.160} $mt={5} $ml={3.700} $c="#333">Consent Form</Txt>
    <Card $mt={3.400} $h={500} $pt={3.700} $pl={3.400}>
      <Head s={3.750} ls={0.030} mt={-0.800} mr={1.500}><b>HSO Reference No. L1455444416</b></Head>
      <Txt $mt={1.600}>{"This Consent Form provides the electronically\nsigned consent required for the Ministry of\nHealth to complete the processing of your\napplication for the Healthy Smiles Ontario\nprogram (“the Program”). To complete this\nonline application, this Consent Form must be\nsigned with your finger, mouse or stylus pen at\nthe bottom of this page."}</Txt>
      <Strong $s={3.850} $mt={2.500}>Section 1: Terms and Conditions</Strong>
      <Txt $mt={1.600} $ls={0.050}>{"This Consent form requires the applicant, and if\napplicable the spouse/common-law partner, to\naccept the "}<b>Terms and Conditions</b>{" below."}</Txt>
      <Strong $s={3.850} $mt={3.100}>I declare that:</Strong>
      <Bullet mt={2.600}>{"The children/youth(s) for whom this Healthy\nSmiles Ontario Application form is being\nmade meet the following eligibility\nrequirements for the Healthy Smiles Ontario\nProgram (“the Program”):"}</Bullet>
      <Bullet mt={1.400} pl={4.800} gap={4.900}>17 years of age or under;</Bullet>
      <Bullet mt={0.300} pl={4.800} gap={4.900}>live in Ontario; and</Bullet>
      <Bullet mt={0.900} pl={4.800} gap={4.900}>{"the household they live in meets the\nincome eligibility requirements as\nindicated at ontario.ca/healthysmiles"}</Bullet>
      <Bullet mt={2.900}>
        {"I have not misrepresented information about\nmyself or my household and understand that\nany misrepresentation may result in the\nimmediate removal of children/youth(s) from\nthe Program, and that the Government of\nOntario may seek reimbursement for any\nservices that were rendered while the\nchildren/youth(s) were ineligible for the\nProgram. I understand that the information on\nthis Application form may be subject to audit\nand verification. I "}
        <b>{"must immediately report\nany changes"}</b>
        {" that may affect the eligibility of\nthe children/youth(s) to the Ministry of Health.\nThe mailing address given on the Application\nform will be the address used for all\nhousehold members listed."}
      </Bullet>
      <Bullet mt={1.300}>{"I understand that only certain dental\nprocedures are covered under the Program, as\nlisted in the Healthy Smiles Ontario Program\nSchedules of Dental Services and Fees. I am\nresponsible for paying for services not covered\nor paid for under the Program, and for any\nservices rendered after the end date of the\nchildren/youth(s) eligibility period."}</Bullet>
      <Bullet mt={1.400}>{"I understand that any existing public or private\ndental insurance coverage for\nchildren/youth(s) listed must be utilized\nbefore resorting to the Program. I understand\nthat if any children/youth(s) listed have other\ninsurance coverage, I may be asked to send\nfurther information from the insurance carrier."}</Bullet>
      <Bullet mt={1.600}>{"I understand that the children/youth(s)\neligibility end date is the earlier of the\nfollowing: either July 31 following the date of\nthis application or the 18th birthday of the\nchildren/youth(s). I understand that the\nOntario Ministry of Finance will reconfirm that\nthe children/youth(s) continue to meet the\neligibility requirements of the Program\nfollowing the Program eligibility period\nend date each benefit year (July 31)."}</Bullet>
    </Card>
  </Screen>
);

const ReferenceBox = styled(Card)`
  margin-left: 3px;
  width: 88px;
`;

const Confirmation = () => (
  <Screen label="Page 6 - Confirmation">
    <PageTop title="Healthy Smiles Ontario - Confirmation" pl={1.600} s={5} ls={0.200} />
    <Txt $mt={4} $ml={4} $lh={6.450}>
      {"Thank you for submitting the Healthy Smiles\nOntario online application. "}
      <b>{"Your application\nalong with the electronically signed Consent\nForm has been received."}</b>
    </Txt>
    <ReferenceBox $mt={4.700} $h={37} $pt={1.800} $pl={4.200}>
      <Strong $s={3.850}>Application Reference Number:</Strong>
      <Txt $s={3.850}>77304259</Txt>
      <Strong $s={3.850} $mt={3.200}>Application - Date and time:</Strong>
      <Txt $s={3.850}>2020-09-02 11:17:26 EDT</Txt>
    </ReferenceBox>
    <Txt $mt={4.800} $ml={5.200} $lh={6.700} $s={3.900}>
      {"Please quote this "}<b>{"application reference\nnumber"}</b>{" if you contact ServiceOntario for more\ninformation about your online Application."}
    </Txt>
    <Txt $s={4.900} $ls={0.180} $mt={5.500} $ml={3.700} $c="#222">Notes and additional information</Txt>
    <Strong $mt={3.300} $ml={3.700}>Notes:</Strong>
    <Txt $mt={1.600} $ml={3.700}>{"Once a child or youth is enrolled, their eligibility\nwill be automatically assessed each benefit year\nand notices will be sent on their enrolment status\nfor each benefit year. The benefit year will run\nfrom August 1 to July 31st each year."}</Txt>
    <Strong $mt={1.600} $ml={3.700}>Additional information:</Strong>
    <Txt $mt={1.400} $ml={3.700} $lh={6.500}>{"For more information about the Healthy Smiles\nOntario program, refer to the website for this\nprogram."}</Txt>
    <Strong $mt={3.300} $ml={3.700}>To get help:</Strong>
    <Txt $mt={1.200} $ml={3.700}>{"For more information:\n• Visit http://www.ontario.ca/healthysmiles\n• Or call ServiceOntario INFOline\n\nToll-free: 1-844-296-6306\nTTY toll-free: 1-800-387-5559\nTTY Toronto only: 416-327-4282"}</Txt>
    <Strong $mt={6.200} $ml={3.700}>Request an alternate format</Strong>
    <Txt $ml={3.700} $lh={6.430}>
      {"Accessible formats and communication\nsupports for any Ontario government document\nor information will be provided upon request. For\nmore information, read the Government of\nOntario’s "}
      <u>Accessible Customer Service Policy</u>
      {" or\ncall us toll-free at 1-800-668-9938 or TTY toll-free\nat 1-800-268-7095 to request an alternate\nformat."}
    </Txt>
    <Txt $mt={1.600} $ml={11} $lh={6.900} $s={4.300} $c="#2f83cf">{"• Would you like to rate our service?\n• www.ontario.ca/healthysmiles"}</Txt>
    <Footer mt={9} />
  </Screen>
);

const filledValues = {
  first: "Johnny",
  last: "Nazer",
  dob: "05/05/1995",
  sin: "658 985 985",
  tel: "999 999 9999",
  sFirst: "Andrea",
  sDob: "08/10/1994",
  sSin: "444 444 444",
  deps: "1",
  cFirst: "Stephen",
  cDob: "09/21/2008",
};

export default function App() {
  return (
    <>
      <Global />
      <Viewport>
        <Canvas>
          <Scenario />
          <OntarioArticle />
          <PageOne />
          <PageOneExpanded />
          <Eligibility label="Page 2" />
          <Eligibility label="Page 11" filled />
          <Reject />
          <Application label="Page 3" />
          <Application label="Page 12" v={filledValues} />
          <Review label="Page 4" />
          <TermsPopup />
          <Review label="Page 13" agreed />
          <ConsentForm />
          <ConsentForm />
          <ConsentForm />
          <Confirmation />
        </Canvas>
      </Viewport>
    </>
  );
}
